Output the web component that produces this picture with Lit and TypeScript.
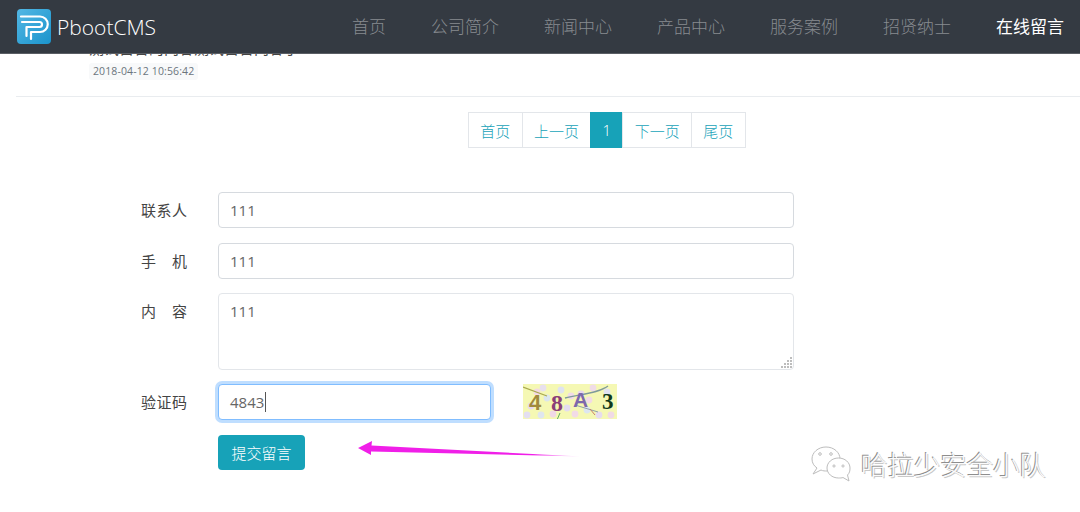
import { LitElement, html, css, svg } from "lit";
import { customElement } from "lit/decorators.js";

const NAV = ["首页", "公司简介", "新闻中心", "产品中心", "服务案例", "招贤纳士", "在线留言"];
const PAGES = [
  { t: "首页" },
  { t: "上一页" },
  { t: "1", active: true },
  { t: "下一页" },
  { t: "尾页" },
];

const SPECKS: [number, number, string][] = [
  [8, 22, "#e6d9ee"], [14, 8, "#f3d9e4"], [24, 14, "#dbe6ee"], [30, 30, "#f0d8e6"],
  [38, 6, "#dfe3f0"], [44, 24, "#e4dcf0"], [52, 30, "#f2dbe6"], [58, 10, "#e8d8ee"],
  [64, 26, "#dde6f0"], [70, 4, "#f0dce6"], [76, 31, "#e6dcee"], [84, 8, "#e2e2f0"],
  [88, 31, "#f0dae6"], [18, 31, "#dfe6ee"], [48, 12, "#f0dbe8"], [4, 31, "#e4dff0"],
  [66, 16, "#f2dbe6"], [20, 4, "#e8e0ee"],
];

const GRIP: [number, number][] = [[9, 0], [9, 3], [6, 3], [9, 6], [6, 6], [3, 6], [9, 9], [6, 9], [3, 9], [0, 9]];

@customElement("app-root")
export class AppRoot extends LitElement {
  static styles = css`
    :host { display: block; }
    * { box-sizing: border-box; }
    .page {
      width: 1080px; height: 512px; overflow: hidden; position: relative;
      background: #fff; font-family: "Noto Sans CJK SC", "Noto Sans", sans-serif;
      color: #333;
    }
    .nav {
      position: absolute; left: 0; top: 0; right: 0; height: 54px; z-index: 2;
      display: flex; align-items: center; padding-left: 17px;
      background: #343a42; border-bottom: 1px solid #5a5e64;
    }
    .logo { width: 34px; height: 35px; display: block; flex: none; }
    .brand { font-family: "Open Sans", sans-serif; font-weight: 300; color: #fff; font-size: 21px; margin-left: 6px; line-height: 28px; }
    .menu { display: flex; gap: 45px; margin-left: auto; margin-right: 16px; margin-top: -2px; }
    .menu span { font-size: 17px; font-weight: 300; color: #878b90; line-height: 24px; white-space: nowrap; }
    .menu span.on { color: #fff; font-weight: 400; }

    .main { display: flex; flex-direction: column; }
    .item { margin-left: 16px; padding: 38px 0 0 73px; border-bottom: 1px solid #e9ecef; height: 97px; }
    .title { font-size: 15px; line-height: 20px; height: 25px; color: #444; white-space: nowrap; }
    .stamp {
      display: block; width: fit-content; font-family: "Open Sans", sans-serif; font-size: 10.5px; line-height: 17px; height: 17px; padding: 0 4px;
      background: #f8f9fa; border-radius: 3px; color: #6c757d; white-space: nowrap; letter-spacing: .12px;
    }
    .pager { display: flex; margin: 15px 0 0 468px; }
    .pager a {
      height: 36px; padding: 0 11.3px; display: flex; align-items: center;
      border: 1px solid #e3e6ea; margin-left: -1px; color: #17a2b8; font-size: 15px; font-weight: 300; white-space: nowrap;
    }
    .pager a:first-child { margin-left: 0; }
    .pager a.active { background: #17a2b8; border-color: #17a2b8; color: #fff; font-family: "Open Sans", sans-serif; }

    .form { display: flex; flex-direction: column; margin: 44px 0 0 141px; }
    .row { display: flex; align-items: flex-start; margin-bottom: 15px; }
    .row.tight { margin-bottom: 14px; }
    .label { width: 46px; margin: 7px 31px 0 0; font-size: 15px; line-height: 22px; color: #444; text-align-last: justify; flex: none; }
    .ctl {
      display: block; width: 576px; height: 36px; padding: 0 11px; font-family: "Open Sans", sans-serif; font-size: 15px;
      color: #666; border: 1px solid #d6dadf; border-radius: 4px; background: #fff; outline: none; margin: 0;
    }
    .area { position: relative; width: 576px; height: 77px; }
    textarea.ctl { height: 77px; padding: 6px 11px; line-height: 22px; resize: none; border-color: #e3e6ea; }
    .grip { position: absolute; right: 2px; bottom: 2px; width: 11px; height: 11px; }
    .focus {
      width: 273px; display: flex; align-items: center; position: relative;
      border-color: #80bdff; box-shadow: 0 0 0 3px rgba(0, 123, 255, .25);
    }
    .caret { width: 1px; height: 20px; background: #555; margin-left: 1px; }
    .captcha { display: block; width: 94px; height: 35px; margin-left: 32px; flex: none; }
    .btn {
      margin-left: 77px; width: 87px; height: 35px; display: flex; align-items: center; justify-content: center;
      background: #17a2b8; color: #fff; font-size: 15px; font-weight: 300; border-radius: 4px;
    }
    .arrow { position: absolute; left: 350px; top: 436px; width: 240px; height: 24px; }
    .mark {
      position: absolute; left: 810px; top: 444px; display: flex; align-items: center; gap: 9px;
      font-size: 26.4px; line-height: 40px; color: #fbfbfb; white-space: nowrap; font-weight: 300;
      text-shadow: -1px -1px 0 #8e8e8e, 1px 1px 0 #c9c9c9;
    }
    .mark span { margin-bottom: 2px; }
    .mark svg { width: 42px; height: 40px; display: block; }
  `;

  private logo() {
    return html`<svg class="logo" viewBox="0 0 34 35">
      <defs><linearGradient id="lg" x1="0" y1="0" x2="1" y2="1">
        <stop offset="0" stop-color="#52b7e4"/><stop offset="1" stop-color="#1b94cc"/>
      </linearGradient></defs>
      <rect width="34" height="35" rx="4" fill="url(#lg)"/>
      <g fill="none" stroke="#fff" stroke-width="2.2" stroke-linecap="round" stroke-linejoin="round">
        <path d="M4 7.5H23a6.5 6.5 0 0 1 0 15.5H14V30"/>
        <path d="M5 13H22.5a2 2 0 0 1 0 5H9.5V27"/>
      </g>
    </svg>`;
  }

  private captcha() {
    return html`<svg class="captcha" viewBox="0 0 94 35">
      <rect width="94" height="35" fill="#f5f8b4"/>
      ${SPECKS.map(([x, y, c]) => svg`<circle cx=${x} cy=${y} r="3.4" fill=${c}/>`)}
      <path d="M0 3L24 12" fill="none" stroke="#a9a94e" stroke-width="1.2"/>
      <path d="M42 14C58 10 76 9 85 2" fill="none" stroke="#7f9a9a" stroke-width="1.4"/>
      <path d="M52 21L75 28" fill="none" stroke="#8fa0a8" stroke-width="1"/>
      <path d="M37 29L34 36" fill="none" stroke="#5fae5f" stroke-width="1"/>
      <path d="M67 25L72 31" fill="none" stroke="#c9806a" stroke-width="1"/>
      <text x="6" y="26" font-family="Liberation Sans" font-weight="700" font-size="22" fill="#a08a3c">4</text>
      <text x="28" y="27" font-family="Liberation Serif" font-weight="700" font-size="24" fill="#8a3f78">8</text>
      <text x="50" y="23" font-family="Liberation Sans" font-weight="700" font-size="21" fill="#7d68ac">A</text>
      <text x="79" y="25" font-family="Liberation Serif" font-weight="700" font-size="23" fill="#10391a">3</text>
    </svg>`;
  }

  render() {
    return html`<div class="page">
      <header class="nav">
        ${this.logo()}
        <span class="brand">PbootCMS</span>
        <nav class="menu">
          ${NAV.map((n, i) => html`<span class=${i === NAV.length - 1 ? "on" : ""}>${n}</span>`)}
        </nav>
      </header>
      <main class="main">
        <section class="item">
          <div class="title">测试留言的内容测试留言内容了</div>
          <span class="stamp">2018-04-12 10:56:42</span>
        </section>
        <div class="pager">
          ${PAGES.map((p) => html`<a class=${p.active ? "active" : ""}>${p.t}</a>`)}
        </div>
        <form class="form">
          <div class="row"><span class="label">联系人</span><input class="ctl" value="111" /></div>
          <div class="row tight"><span class="label">手 机</span><input class="ctl" value="111" /></div>
          <div class="row tight"><span class="label">内 容</span>
            <div class="area">
              <textarea class="ctl">111</textarea>
              <svg class="grip" viewBox="0 0 11 11">
                ${GRIP.map(([x, y]) => svg`<rect x=${x} y=${y} width="2" height="2" fill="#bdbdbd"/>`)}
              </svg>
            </div>
          </div>
          <div class="row">
            <span class="label">验证码</span>
            <div class="ctl focus">4843<span class="caret"></span></div>
            ${this.captcha()}
          </div>
          <div class="btn">提交留言</div>
        </form>
      </main>
      <svg class="arrow" viewBox="0 0 240 24">
        <defs><linearGradient id="ag" x1="0" y1="0" x2="1" y2="0">
          <stop offset="0" stop-color="#f01fe8"/><stop offset=".78" stop-color="#f01fe8"/><stop offset="1" stop-color="#f01fe8" stop-opacity="0"/>
        </linearGradient></defs>
        <path d="M8 12L22 5L21.5 9.5L232 20.5L21 15.5L21 19Z" fill="url(#ag)"/>
      </svg>
      <div class="mark">
        <svg viewBox="0 0 42 40" fill="#fff" stroke="#bdbdbd" stroke-width="1">
          <path d="M16 2C8 2 2 7.500 2 14C2 18 4 21 7 23L3 29L11 25C13 26 15 26 17 26C24 26 30 21 30 14C30 7.500 24 2 16 2Z"/>
          <path d="M28.500 13C22 13 17 17.500 17 23C17 28.500 22 33 28.500 33C30 33 32 33 33 32.500L39 36L37.500 30C39.500 28 40 26 40 23C40 17.500 35 13 28.500 13Z"/>
          <circle cx="10" cy="9" r="1.3"/><circle cx="21" cy="9" r="1.3"/>
          <circle cx="24" cy="21" r="1.1"/><circle cx="33" cy="21" r="1.1"/>
        </svg>
        <span>哈拉少安全小队</span>
      </div>
    </div>`;
  }
}
